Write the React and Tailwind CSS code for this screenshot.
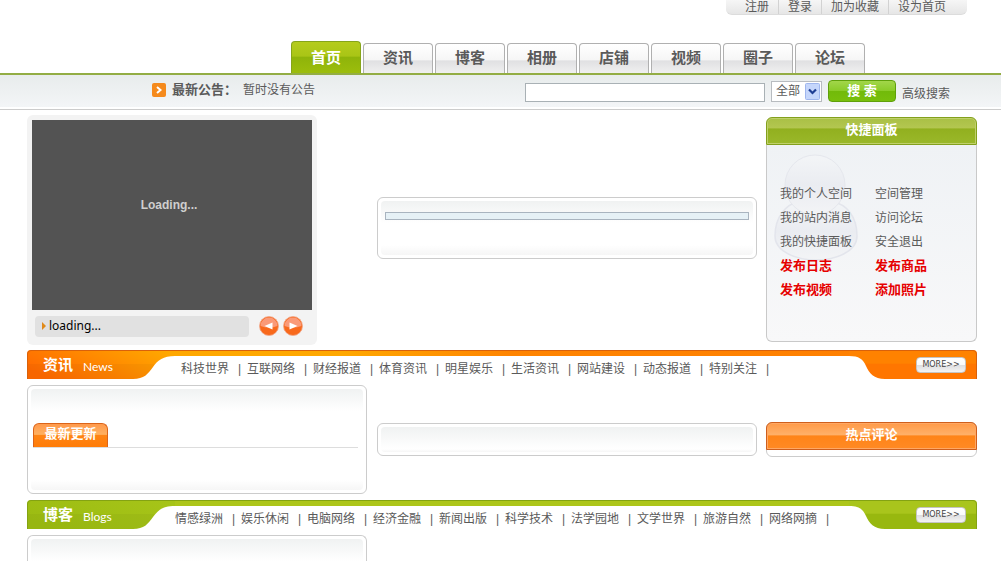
import React from 'react';

const topLinks = ['注册', '登录', '加为收藏', '设为首页'];

const tabs = ['首页', '资讯', '博客', '相册', '店铺', '视频', '圈子', '论坛'];

const newsLinks = ['科技世界', '互联网络', '财经报道', '体育资讯', '明星娱乐', '生活资讯', '网站建设', '动态报道', '特别关注'];

const blogLinks = ['情感绿洲', '娱乐休闲', '电脑网络', '经济金融', '新闻出版', '科学技术', '法学园地', '文学世界', '旅游自然', '网络网摘'];

const quickLinks = [
  { label: '我的个人空间' },
  { label: '空间管理' },
  { label: '我的站内消息' },
  { label: '访问论坛' },
  { label: '我的快捷面板' },
  { label: '安全退出' },
  { label: '发布日志', hot: true },
  { label: '发布商品', hot: true },
  { label: '发布视频', hot: true },
  { label: '添加照片', hot: true },
];

const TopBar = () => (
  <div className="flex justify-end pr-[34px]">
    <ul className="flex h-[15px] rounded-b-md border-b border-[#dcdcdc] bg-gradient-to-b from-[#f6f6f6] to-[#e6e6e6] pl-[10px] pr-3">
      {topLinks.map((label, i) => (
        <li key={label} className={`px-[9px] leading-[14px] ${i > 0 ? 'border-l border-[#d2d2d2]' : ''}`}>
          <a href="#">{label}</a>
        </li>
      ))}
    </ul>
  </div>
);

const MainNav = () => (
  <nav className="mt-[26px] flex items-end justify-end gap-0.5 border-b-2 border-[#93ad44] pr-[136px] text-[15px] font-bold">
    {tabs.map((label, i) => (
      <a
        key={label}
        href="#"
        className={`w-[70px] rounded-t border border-b-0 text-center ${
          i === 0
            ? 'h-8 border-[#86a51a] bg-[linear-gradient(#b5cc1c_0%,#a9c516_45%,#8fb40a_50%,#9cbd0c_100%)] leading-[32px] text-white'
            : 'h-[30px] border-[#b0b0b0] bg-[linear-gradient(#ffffff_0%,#f6f6f6_55%,#e0e0e2_58%,#f0f0f0_100%)] leading-[28px] text-[#5a5a5a]'
        }`}
      >
        {label}
      </a>
    ))}
  </nav>
);

const SearchBar = () => (
  <div className="border-b border-[#cccccc] pb-0.5">
    <div className="flex h-8 items-start justify-between bg-gradient-to-b from-[#e8ecec] to-[#f3f5f7] pl-[152px] pr-[51px]">
      <p className="flex h-[30px] items-center">
        <svg width="14" height="14" viewBox="0 0 14 14" className="mr-1.5">
          <rect width="14" height="14" rx="2" fill="#f58a1c" />
          <path d="M5 4 L8.5 7 L5 10" fill="none" stroke="#fff" strokeWidth="2" />
        </svg>
        <strong className="text-[13px]">最新公告：</strong>
        <span className="ml-1.5">暂时没有公告</span>
      </p>
      <form className="flex h-8 items-center" onSubmit={(e) => e.preventDefault()}>
        <input
          type="text"
          aria-label="搜索"
          className="mt-0.5 h-[19px] w-60 border border-[#a9b1b5] bg-white px-1 outline-none"
        />
        <div className="relative ml-1.5">
          <select
            aria-label="搜索范围"
            className="block h-[21px] w-[51px] appearance-none border border-[#b8bcc0] bg-white pl-1 leading-[19px] outline-none"
          >
            <option>全部</option>
          </select>
          <svg width="15" height="17" viewBox="0 0 15 17" className="pointer-events-none absolute right-0.5 top-0.5">
            <rect x="0.5" y="0.5" width="14" height="16" rx="1" fill="#c5d6fb" stroke="#9fb6ee" />
            <path d="M4 6.5 L7.5 10 L11 6.5" fill="none" stroke="#1f3f94" strokeWidth="2.2" />
          </svg>
        </div>
        <button
          type="submit"
          className="ml-1.5 h-[22px] w-[68px] rounded border border-[#5fa00a] bg-[linear-gradient(#a2d64a_0%,#8acb28_50%,#72ba0a_52%,#78bf0c_100%)] text-[13px] font-bold leading-[20px] text-white"
        >
          搜 索
        </button>
        <a href="#" className="ml-1.5 mt-1.5">高级搜索</a>
      </form>
    </div>
  </div>
);

const RoundButton = ({ label, path }) => (
  <button type="button" aria-label={label} className="h-5 w-5">
    <svg width="20" height="20" viewBox="0 0 20 20">
      <circle cx="10" cy="10" r="9.5" fill="#f8691c" stroke="#f0a78a" strokeWidth="0.8" />
      <path d="M1.5 10 A8.5 8.5 0 0 1 18.5 10 Q10 13 1.5 10 Z" fill="#fa9a78" />
      <path d={path} fill="#fff" />
    </svg>
  </button>
);

const SlideShow = () => (
  <div className="mt-1 w-[290px] rounded-md bg-[#f3f3f3] p-[5px]">
    <div className="flex h-[190px] items-center justify-center bg-[#535353] pb-5 pr-1.5 font-bold text-[#cfcfcf]">
      Loading...
    </div>
    <div className="flex h-[30px] items-center pl-[3px] pt-0.5">
      <p className="flex h-[21px] w-[214px] items-center rounded bg-[#e1e1e1] pl-[7px] font-['Noto_Sans'] text-[12px] text-black">
        <svg width="4" height="8" viewBox="0 0 4 8" className="mr-[3px]">
          <path d="M0 0 L4 4 L0 8 Z" fill="#e08a1a" />
        </svg>
        loading...
      </p>
      <div className="ml-[10px] flex gap-1">
        <RoundButton label="上一张" path="M13.5 6.5 V13.5 L5.5 10 Z" />
        <RoundButton label="下一张" path="M6.5 6.5 V13.5 L14.5 10 Z" />
      </div>
    </div>
  </div>
);

const Panel = ({ className = '', children }) => (
  <div className={`rounded-md border border-[#cccccc] bg-white p-[3px] ${className}`}>
    <div className="h-full rounded-sm bg-[linear-gradient(#f0f2f2_0,#ffffff_22px,#ffffff_calc(100%-10px),#f6f6f6_100%)]">
      {children}
    </div>
  </div>
);

const QuickPanel = () => (
  <section className="ml-[9px] mt-1.5 h-[225px] w-[211px] self-start">
    <h2 className="h-7 rounded-t-md border border-[#83a01c] bg-[linear-gradient(#a9c045_0%,#b3c650_38%,#92b01f_42%,#9ab82a_100%)] text-center text-[13px] font-bold leading-[24px] text-white shadow-[inset_0_0_0_1px_#bfd06c]">
      快捷面板
    </h2>
    <div className="relative h-[197px] rounded-b-md border border-t-0 border-[#c9c9c9] bg-gradient-to-b from-[#eff2f5] to-[#f8f8f9] pl-[13px] pt-[37px]">
      <svg width="86" height="108" viewBox="0 0 86 108" className="absolute left-1.5 top-[9px]">
        <defs>
          <linearGradient id="person" x1="0" y1="0" x2="0" y2="1">
            <stop offset="0" stopColor="#f3f5f7" />
            <stop offset="0.5" stopColor="#eaecf1" />
            <stop offset="1" stopColor="#f3f4f6" />
          </linearGradient>
        </defs>
        <path d="M2 82 C2 62 14 50 25 48 H60 C73 50 84 62 84 82 C84 98 62 106 43 106 C24 106 2 98 2 82 Z" fill="url(#person)" stroke="#e3e5ec" strokeWidth="1.5" />
        <circle cx="42" cy="31" r="30" fill="url(#person)" stroke="#e5e7ed" />
      </svg>
      <ul className="relative grid grid-cols-[95px_1fr] leading-[24px]">
        {quickLinks.map((link) => (
          <li key={link.label} className="h-6">
            <a href="#" className={link.hot ? 'text-[13px] font-bold text-[#e60000]' : ''}>{link.label}</a>
          </li>
        ))}
      </ul>
    </div>
  </section>
);

const schemes = {
  orange: {
    id: 'orange',
    strip: 'border-[#d9610a] bg-[linear-gradient(90deg,#ffa800_0%,#ffa800_25%,#ff8400_50%,#ff8000_100%)]',
    edge: '#d9610a',
    left: ['#ff6a00', '#ffa800'],
    right: ['#ff8200', '#ff7600'],
  },
  green: {
    id: 'green',
    strip: 'border-[#84a312] bg-[#adc61a]',
    edge: '#84a312',
    left: ['#9cbc12', '#a6c418'],
    right: ['#a9c51c', '#98b80f'],
  },
};

const SectionBar = ({ title, english, links, scheme, indent = '' }) => (
  <div className="flex h-[29px]">
    <h2 className="relative w-[148px] shrink-0">
      <svg width="148" height="29" viewBox="0 0 148 29" className="absolute left-0 top-0">
        <defs>
          <linearGradient id={`${scheme.id}-left`} x1="0" y1="0.6" x2="1" y2="0.2">
            <stop offset="0" stopColor={scheme.left[0]} />
            <stop offset="1" stopColor={scheme.left[1]} />
          </linearGradient>
        </defs>
        <path d="M0 29 V4 Q0 0 4 0 H148 V6 C136 6 131 10 126 17 C121 24 117 29 106 29 Z" fill={`url(#${scheme.id}-left)`} />
        <path d="M1 14 H128 L126 17 C121 24 117 29 106 29 H1 Z" fill="#000" opacity="0.03" />
        <path d="M0.5 29 V4 Q0.5 0.5 4 0.5 H148" fill="none" stroke={scheme.edge} />
      </svg>
      <span className="relative flex h-[29px] items-center pl-4 text-white">
        <span className="text-[15px] font-bold">{title}</span>
        <span className="ml-2.5 pt-1 font-[Lato] text-[12px] font-normal">{english}</span>
      </span>
    </h2>
    <div className="min-w-0 flex-1">
      <div className={`h-1.5 border-t ${scheme.strip}`} />
      <ul className={`flex h-[23px] items-center pt-0.5 ${indent}`}>
        {links.map((label) => (
          <li key={label} className="flex w-[66px] shrink-0 items-center whitespace-nowrap">
            <a href="#">{label}</a>
            <span className="ml-[9px]">|</span>
          </li>
        ))}
      </ul>
    </div>
    <div className="relative w-32 shrink-0">
      <svg width="128" height="29" viewBox="0 0 128 29" className="absolute left-0 top-0">
        <defs>
          <linearGradient id={`${scheme.id}-right`} x1="0" y1="0" x2="0" y2="1">
            <stop offset="0" stopColor={scheme.right[0]} />
            <stop offset="0.45" stopColor={scheme.right[0]} />
            <stop offset="0.5" stopColor={scheme.right[1]} />
            <stop offset="1" stopColor={scheme.right[1]} />
          </linearGradient>
        </defs>
        <path d="M0 0 H124 Q128 0 128 4 V29 H36 C25 29 20 23 17 16 C14 9 10 6 0 6 Z" fill={`url(#${scheme.id}-right)`} />
        <path d="M0 0.5 H124 Q127.5 0.5 127.5 4 V29" fill="none" stroke={scheme.edge} />
      </svg>
      <div className="relative flex justify-end pr-[11px] pt-[7px]">
        <a
          href="#"
          className="h-4 w-[50px] rounded border border-[#c4c4c4] bg-[linear-gradient(#ffffff_0%,#fafafa_48%,#dddddf_52%,#f4f4f4_100%)] text-center font-['DejaVu_Sans'] text-[8px] leading-[14px] text-[#444444]"
        >
          MORE&gt;&gt;
        </a>
      </div>
    </div>
  </div>
);

export default function App() {
  return (
    <div className="bg-white font-['Liberation_Sans','Noto_Sans_CJK_SC',sans-serif] text-[12px] leading-[16px] text-[#5a5a5a]">
      <header>
        <TopBar />
        <MainNav />
        <SearchBar />
      </header>

      <main className="pl-[27px] pr-6 pt-px">
        <div className="flex items-center">
          <div className="w-[340px] shrink-0">
            <SlideShow />
          </div>
          <Panel className="ml-[10px] h-[62px] min-w-0 flex-1">
            <div className="px-1 pt-[11px]">
              <div className="h-2 border border-[#a9b4bf] bg-[#e6f1f6]" />
            </div>
          </Panel>
          <QuickPanel />
        </div>

        <div className="mt-[5px]">
          <SectionBar title="资讯" english="News" links={newsLinks} scheme={schemes.orange} indent="pl-1.5" />
        </div>

        <div className="mt-1.5 flex items-center">
          <Panel className="h-[109px] w-[340px] shrink-0">
            <div className="pl-0.5 pr-[5px] pt-[34px]">
              <div className="flex border-b border-[#dddddd]">
                <h3 className="h-6 w-[75px] rounded-t-md border border-b-0 border-[#dc6418] bg-[linear-gradient(#ff9a4c_0%,#ffb060_45%,#ff8414_50%,#ff7c08_100%)] text-center text-[13px] font-bold leading-[20px] text-white">
                  最新更新
                </h3>
              </div>
            </div>
          </Panel>
          <Panel className="ml-[10px] h-[33px] min-w-0 flex-1" />
          <section className="ml-[9px] h-[35px] w-[211px] rounded-md border border-[#cccccc]">
            <h3 className="-mx-px -mt-px h-7 rounded-t-md border border-[#cf5f1c] bg-[linear-gradient(#ff9a48_0%,#ffb068_45%,#ff8418_50%,#ff8a24_100%)] text-center text-[13px] font-bold leading-[24px] text-white shadow-[inset_0_0_0_1px_#ffa864]">
              热点评论
            </h3>
          </section>
        </div>

        <div className="mt-1.5">
          <SectionBar title="博客" english="Blogs" links={blogLinks} scheme={schemes.green} />
        </div>

        <div className="mt-1.5 h-[26px] w-[340px] rounded-t-md border border-b-0 border-[#cccccc] px-[3px] pt-[3px]">
          <div className="h-full rounded-t-sm bg-gradient-to-b from-[#f0f2f2] to-white" />
        </div>
      </main>
    </div>
  );
}
